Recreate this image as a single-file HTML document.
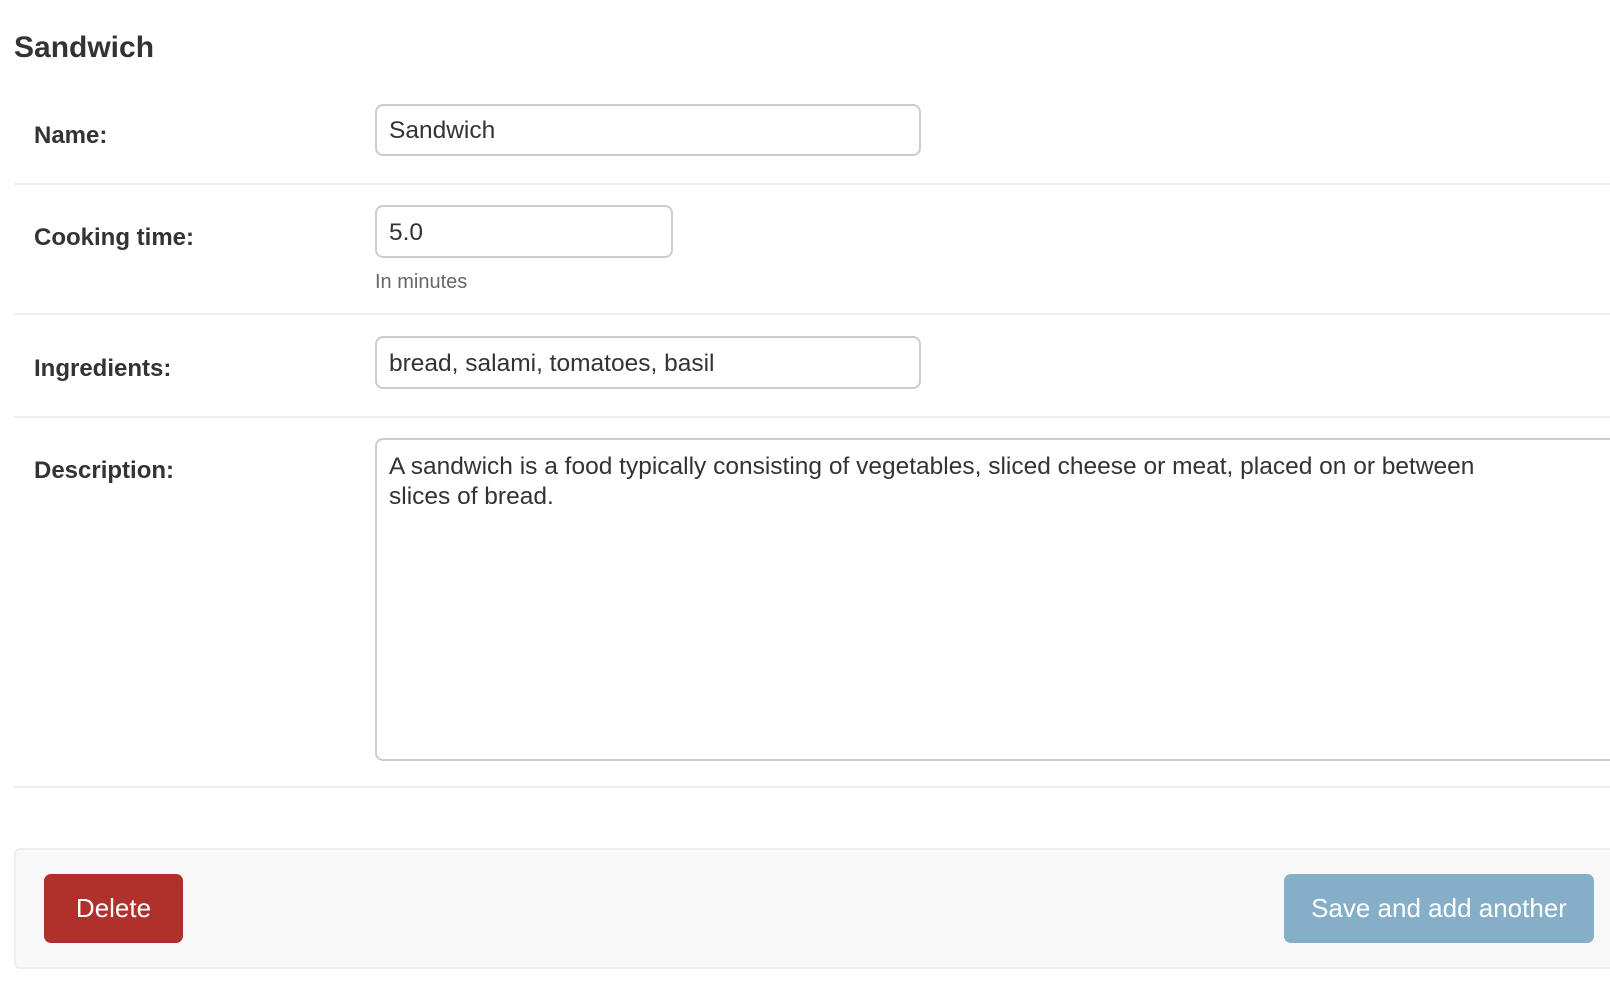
<!DOCTYPE html>
<html><head><meta charset="utf-8"><style>
*{box-sizing:border-box;margin:0;padding:0}
body{width:1610px;height:986px;overflow:hidden;background:#fff;font-family:"Liberation Sans",sans-serif;color:#333;position:relative}
.a{position:absolute}
h2{position:absolute;left:14px;top:31px;font-size:30px;font-weight:bold;color:#333}
.lab{position:absolute;left:34px;font-size:24px;font-weight:bold;color:#333}
.inp{position:absolute;left:375px;border:2px solid #ccc;border-radius:8px;font-size:24.5px;padding-left:12px;color:#333;background:#fff}
.line{position:absolute;left:14px;right:0;height:2px;background:#eee}
.btn{position:absolute;top:874px;height:69px;border-radius:7px;color:#fff;font-size:26px;display:flex;align-items:center;justify-content:center}
</style></head><body>
<h2>Sandwich</h2>
<div class="lab" style="top:122px">Name:</div>
<div class="inp" style="top:104px;width:546px;height:52px;line-height:50px">Sandwich</div>
<div class="line" style="top:183px"></div>
<div class="lab" style="top:224px">Cooking time:</div>
<div class="inp" style="top:205px;width:298px;height:53px;line-height:51px">5.0</div>
<div class="a" style="left:375px;top:271px;font-size:20px;color:#666">In minutes</div>
<div class="line" style="top:313px"></div>
<div class="lab" style="top:355px">Ingredients:</div>
<div class="inp" style="top:336px;width:546px;height:53px;line-height:51px">bread, salami, tomatoes, basil</div>
<div class="line" style="top:416px"></div>
<div class="lab" style="top:457px">Description:</div>
<div class="inp" style="top:438px;width:1250px;height:323px;padding-top:12px;line-height:30px;padding-right:120px">A sandwich is a food typically consisting of vegetables, sliced cheese or meat, placed on or between slices of bread.</div>
<div class="line" style="top:786px"></div>
<div class="a" style="left:14px;top:848px;width:1610px;height:121px;background:#f8f8f8;border:2px solid #eee;border-radius:6px"></div>
<div class="btn" style="left:44px;width:139px;background:#b0302b">Delete</div>
<div class="btn" style="left:1284px;width:310px;background:#85aec8">Save and add another</div>
</body></html>
